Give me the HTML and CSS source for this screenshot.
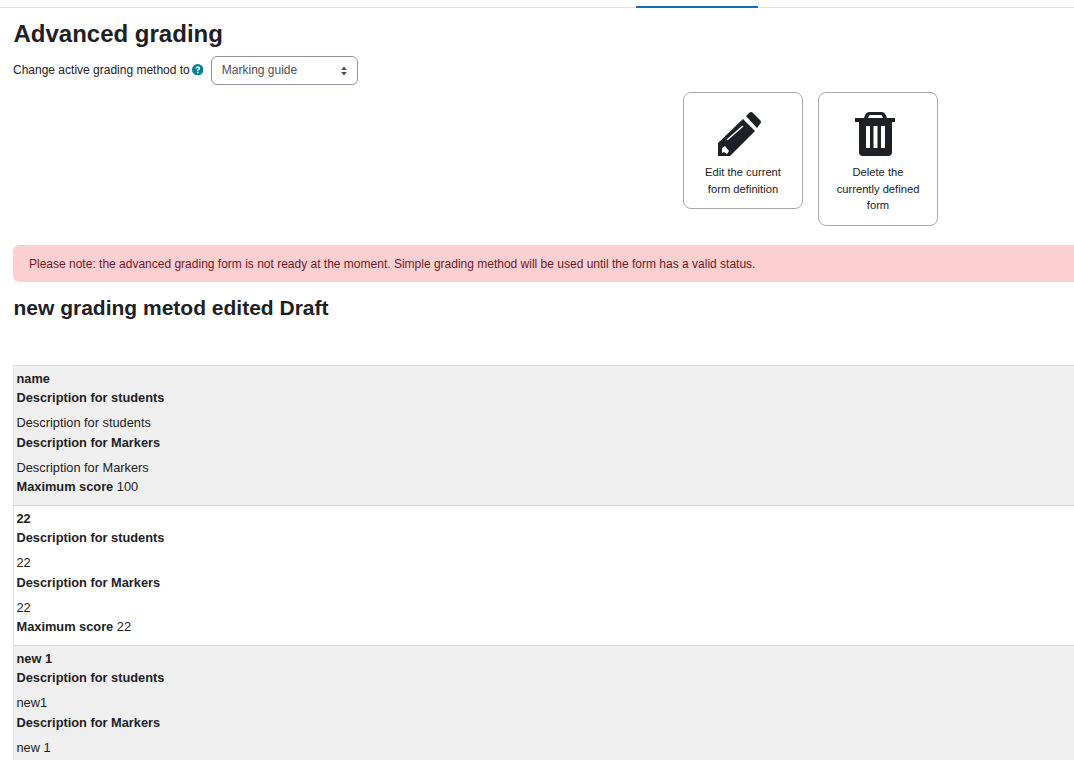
FILE: index.html
```html
<!DOCTYPE html>
<html lang="en">
<head>
<meta charset="utf-8">
<title>Advanced grading</title>
<link rel="stylesheet" href="styles.css">
</head>
<body>
<nav class="tabs"><span class="tab-active"></span></nav>
<main class="page">
  <h2 class="title">Advanced grading</h2>
  <form class="method">
    <label class="method-label">Change active grading method to</label>
    <svg class="help" viewBox="0 0 24 24" aria-hidden="true"><circle cx="12" cy="12" r="12" fill="#008196"/><path d="M7.300 9.200C7.600 6.400 9.600 4.700 12.200 4.700c2.700 0 4.800 1.700 4.800 4.100 0 1.800-1.100 2.800-2.300 3.600-1 .7-1.200 1-1.200 2.100H10.400c0-1.900.6-2.800 1.800-3.600.9-.6 1.500-1 1.500-1.900 0-.9-.7-1.500-1.600-1.500-1.100 0-1.700.7-1.900 1.900zM10.300 16.200h3.200v3.100h-3.200z" fill="#fff"/></svg>
    <span class="select"><span>Marking guide</span>
      <svg class="carets" viewBox="0 0 8 12" aria-hidden="true"><path d="M4 1.500 6.800 5H1.200zM4 10.500 1.200 7h5.600z" fill="#495057"/></svg>
    </span>
  </form>
  <div class="actions">
    <a class="action">
      <svg class="action-icon" viewBox="0 0 46 46" aria-hidden="true"><path fill="#1d2125" d="M1 32 26 8 38 20 13 45H1zM29 5 32 2Q34 0 36 2L43 9Q45 11 43 13L40 17z"/><path fill="none" stroke="#fff" stroke-width="1.500" d="M10 29 26 15"/><path fill="#fff" d="M5 37 8 35 12 40 10 43 7 41 5 42z"/></svg>
      <span>Edit the current form definition</span>
    </a>
    <a class="action">
      <svg class="action-icon" viewBox="0 0 46 46" aria-hidden="true"><path fill-rule="evenodd" fill="#1d2125" d="M17 1H30Q32.500 1 33.500 3.500L35 7H43V11H40V41Q40 45 36 45H11Q7 45 7 41V11H3V7H12L13.500 3.500Q14.500 1 17 1zM17.500 4 16 7H31L29.500 4zM14 15V37H18V15zM21.500 15V37H25.500V15zM29 15V37H33V15z"/></svg>
      <span>Delete the currently defined form</span>
    </a>
  </div>
  <div class="alert">Please note: the advanced grading form is not ready at the moment. Simple grading method will be used until the form has a valid status.</div>
  <h3 class="form-name">new grading metod edited Draft</h3>
  <section class="guide">
    <div class="row row-odd">
      <div class="crit">name</div>
      <div class="label">Description for students</div>
      <div class="desc">Description for students</div>
      <div class="label">Description for Markers</div>
      <div class="desc">Description for Markers</div>
      <div class="score"><b>Maximum score</b> 100</div>
    </div>
    <div class="row">
      <div class="crit">22</div>
      <div class="label">Description for students</div>
      <div class="desc">22</div>
      <div class="label">Description for Markers</div>
      <div class="desc">22</div>
      <div class="score"><b>Maximum score</b> 22</div>
    </div>
    <div class="row row-odd">
      <div class="crit">new 1</div>
      <div class="label">Description for students</div>
      <div class="desc">new1</div>
      <div class="label">Description for Markers</div>
      <div class="desc">new 1</div>
    </div>
  </section>
</main>
</body>
</html>
```
FILE: styles.css
```css
html, body {
  margin: 0;
  height: 760px;
  overflow: hidden;
  background: #fff;
}
body {
  font-family: "Liberation Sans", Arial, sans-serif;
  font-size: 12.8px;
  line-height: 19.2px;
  color: #1d2125;
}
.tabs {
  height: 8px;
  box-sizing: border-box;
  border-bottom: 1px solid #dee2e6;
  position: relative;
}
.tab-active {
  position: absolute;
  left: 636px;
  width: 122px;
  bottom: -1px;
  height: 2px;
  background: #0f6cbf;
}
.page {
  padding-left: 13px;
}
.title {
  margin: 0;
  padding: 11px 0 0 0.5px;
  font-size: 24px;
  line-height: 29px;
  font-weight: 700;
}
.method {
  display: flex;
  align-items: center;
  margin-top: 8px;
  height: 29px;
  font-size: 12px;
}
.help {
  width: 11.5px;
  height: 11.5px;
  margin-left: 2px;
  margin-top: -2px;
}
.select {
  box-sizing: border-box;
  width: 147px;
  height: 29px;
  margin-left: 7.5px;
  padding: 0 10px;
  display: flex;
  align-items: center;
  justify-content: space-between;
  border: 1px solid #8f959e;
  border-radius: 6px;
  color: #495057;
}
.carets {
  width: 8px;
  height: 12px;
  margin-right: -1px;
}
.actions {
  display: flex;
  align-items: flex-start;
  gap: 15px;
  margin-top: 7px;
  padding-left: 670px;
}
.action {
  box-sizing: border-box;
  width: 120px;
  padding: 18px 16px 11px;
  display: flex;
  flex-direction: column;
  align-items: center;
  text-align: center;
  border: 1px solid #a5a9ae;
  border-radius: 8px;
  font-size: 11.2px;
  line-height: 16.5px;
}
.action-icon {
  width: 46px;
  height: 46px;
  margin: 0 6px 7px 0;
  display: block;
}
.alert {
  box-sizing: border-box;
  margin-top: 19.5px;
  height: 37px;
  padding: 3px 0 0 16px;
  display: flex;
  align-items: center;
  background: #fcd0d0;
  border-radius: 6px 0 0 6px;
  color: #6e1a2a;
  font-size: 12px;
}
.form-name {
  margin: 0;
  padding: 14px 0 0 0.5px;
  font-size: 21px;
  line-height: 24px;
  font-weight: 700;
}
.guide {
  margin-top: 45px;
  border-left: 1px solid #dee2e6;
}
.row {
  box-sizing: border-box;
  height: 140px;
  padding: 2.6px 0 0 2.5px;
  border-top: 1px solid #d4d6d8;
}
.row-odd {
  background: #efefef;
}
.crit, .label, b {
  font-weight: 700;
}
.desc {
  margin-top: 6.4px;
}
```
